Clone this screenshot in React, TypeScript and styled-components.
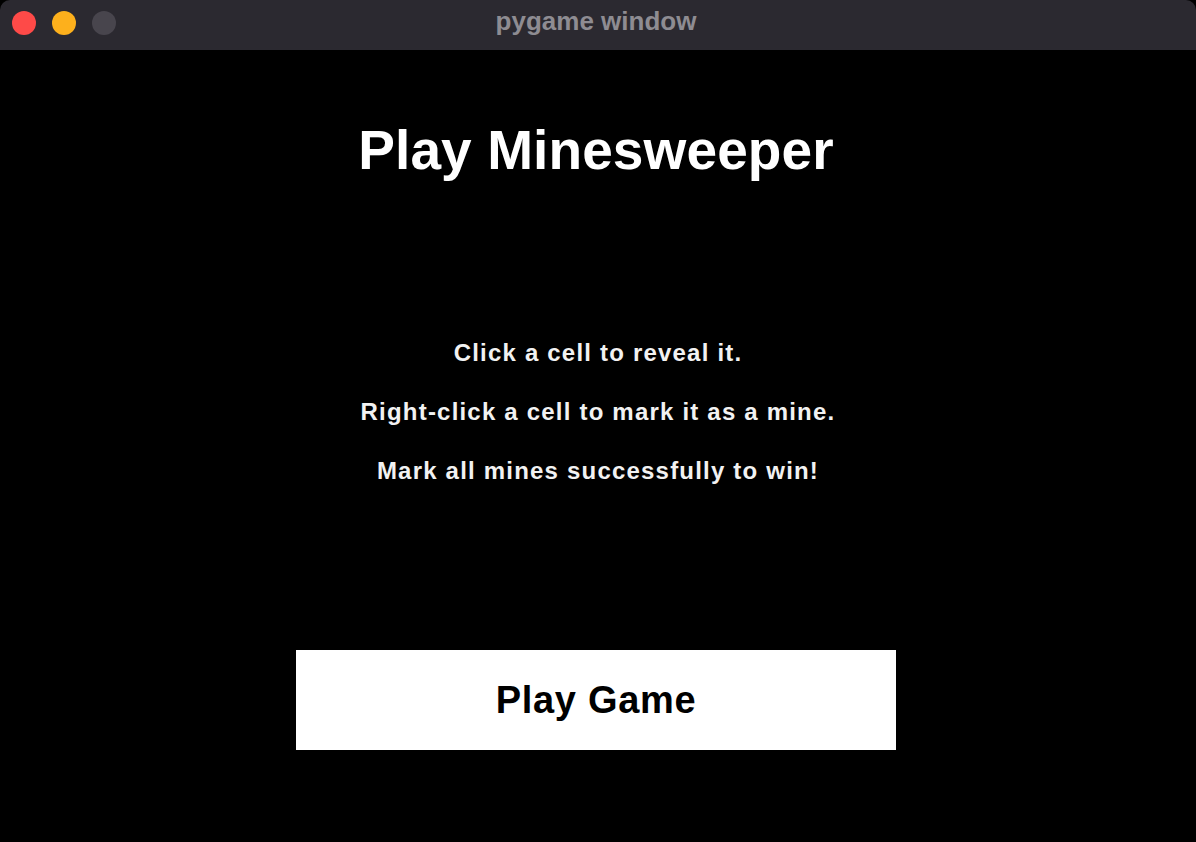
import styled, { createGlobalStyle } from "styled-components";

const GlobalStyle = createGlobalStyle`
  html, body {
    margin: 0;
    padding: 0;
    background: #000;
  }
  body {
    font-family: "Liberation Sans", Arial, sans-serif;
  }
`;

const Window = styled.div`
  width: 1196px;
  height: 842px;
  display: flex;
  flex-direction: column;
  background: #000;
  border-radius: 10px;
  overflow: hidden;
`;

const TitleBar = styled.div`
  height: 50px;
  flex-shrink: 0;
  background: #2b2930;
  display: grid;
  grid-template-columns: 1fr auto 1fr;
  align-items: center;
  padding: 0 12px;
`;

const Lights = styled.div`
  display: flex;
  gap: 16px;
  margin-top: -4px;
`;

const Light = styled.span<{ $color: string }>`
  width: 24px;
  height: 24px;
  border-radius: 50%;
  background: ${(p) => p.$color};
`;

const WindowTitle = styled.div`
  color: #8e8c92;
  font-size: 26px;
  font-weight: bold;
  margin-top: -7px;
  margin-left: -4px;
`;

const Content = styled.main`
  flex: 1;
  display: flex;
  flex-direction: column;
  align-items: center;
  color: #fff;
`;

const Heading = styled.h1`
  margin: 70px 4px 0 0;
  font-size: 55px;
  font-weight: bold;
  line-height: 60px;
  letter-spacing: 0.1px;
`;

const Instructions = styled.div`
  margin-top: 159px;
  display: flex;
  flex-direction: column;
  align-items: center;
  gap: 31px;
`;

const Line = styled.p`
  margin: 0;
  font-size: 24px;
  font-weight: bold;
  line-height: 28px;
  letter-spacing: 1.2px;
  color: #f2f2f2;
`;

const PlayButton = styled.button`
  margin-top: 165px;
  margin-right: 4px;
  width: 600px;
  height: 100px;
  border: none;
  background: #fff;
  color: #000;
  font-family: "Liberation Sans", Arial, sans-serif;
  font-size: 38px;
  font-weight: bold;
  letter-spacing: 0.7px;
  cursor: pointer;
`;

export default function App() {
  return (
    <>
      <GlobalStyle />
      <Window>
        <TitleBar>
          <Lights>
            <Light $color="#fe4a48" />
            <Light $color="#fdb01c" />
            <Light $color="#48454d" />
          </Lights>
          <WindowTitle>pygame window</WindowTitle>
          <div />
        </TitleBar>
        <Content>
          <Heading>Play Minesweeper</Heading>
          <Instructions>
            <Line>Click a cell to reveal it.</Line>
            <Line>Right-click a cell to mark it as a mine.</Line>
            <Line>Mark all mines successfully to win!</Line>
          </Instructions>
          <PlayButton>Play Game</PlayButton>
        </Content>
      </Window>
    </>
  );
}
